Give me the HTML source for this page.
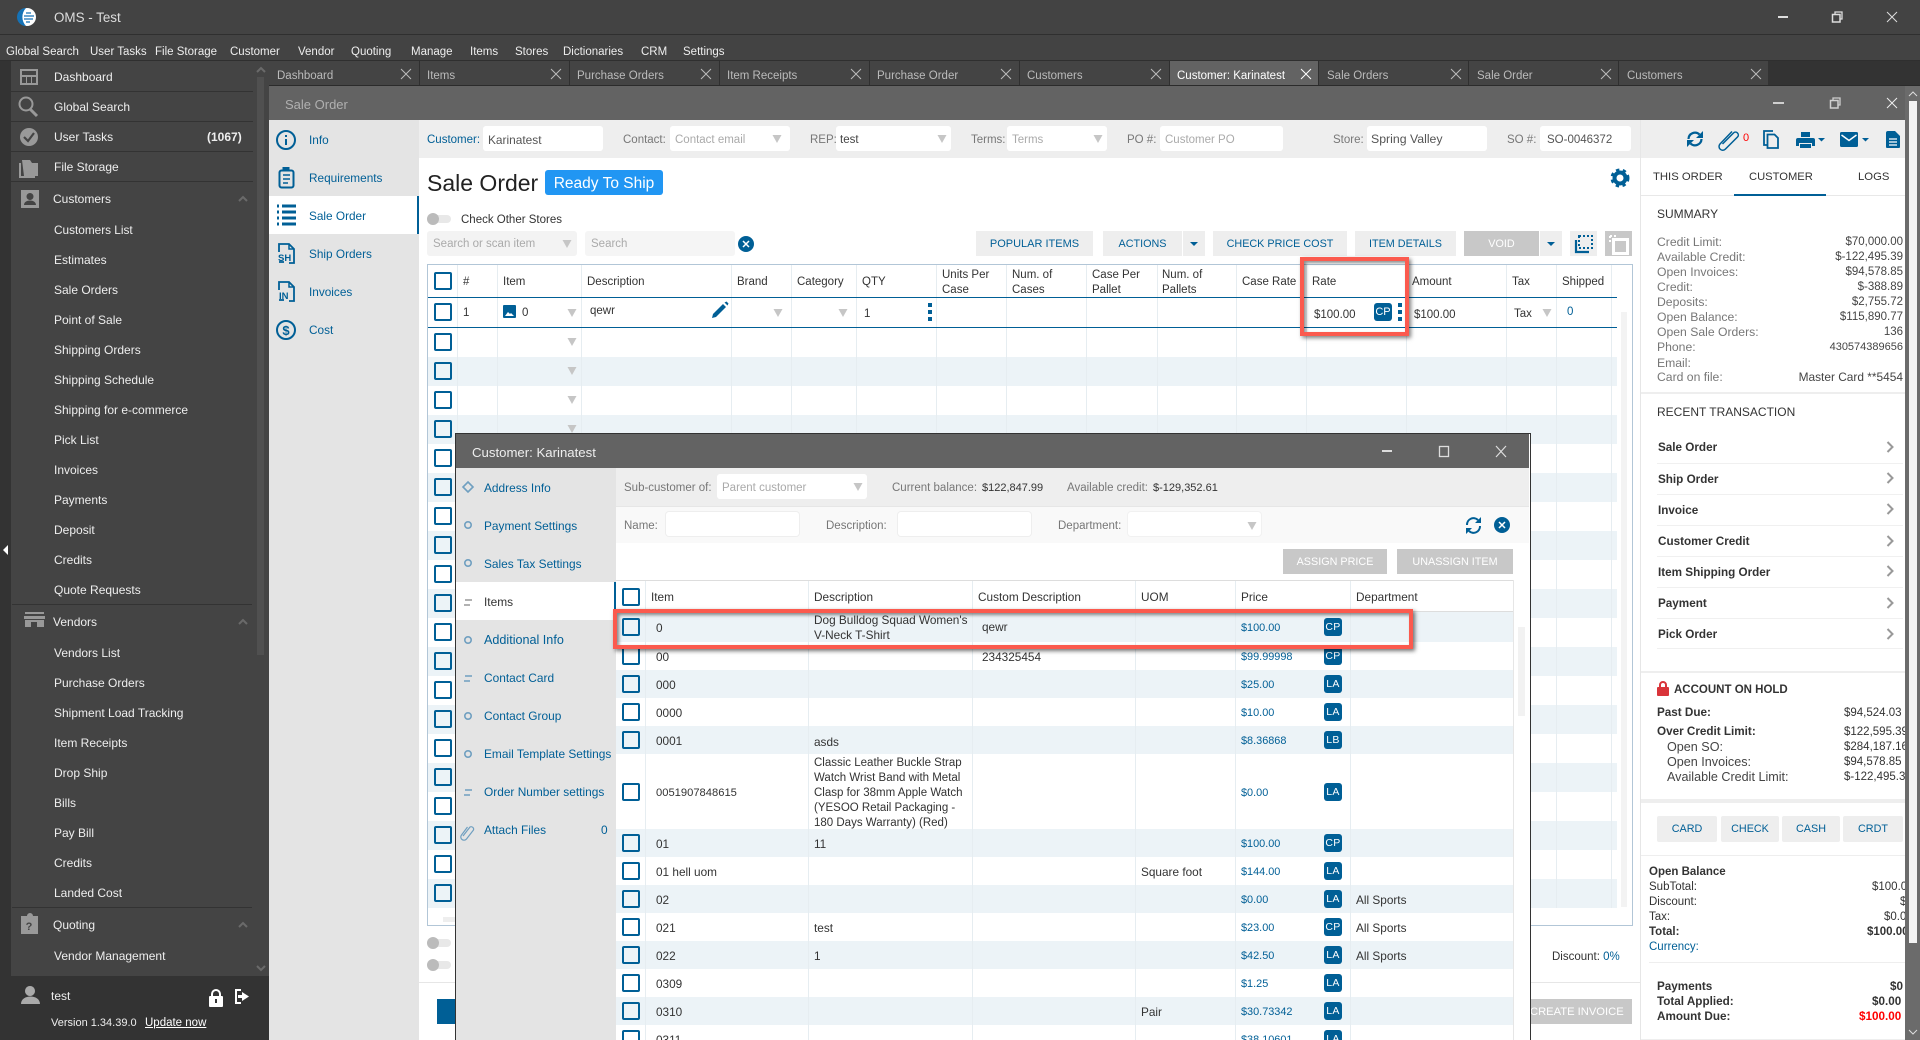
<!DOCTYPE html>
<html><head><meta charset="utf-8"><title>OMS - Test</title>
<style>
html,body{margin:0;padding:0;width:1920px;height:1040px;overflow:hidden;background:#fff}
body{position:relative;font-family:"Liberation Sans",sans-serif;font-size:11.5px;color:#333}
p{position:absolute;margin:1px 0 0;white-space:nowrap;line-height:14px}
.r{position:absolute}
.g{position:absolute;left:0;top:0;width:0;height:0}
svg.o{position:absolute;left:0;top:0;pointer-events:none}
.w p{color:#eee}.tb p{color:#bbb}
.sb p{font-size:12px;margin-top:0}
.mn p{font-size:11.9px}
.sn p{font-size:11.8px;margin-top:0}
.tx p{font-size:11.8px}
.bl p,p.bl{color:#005f96}.gr p,p.gr{color:#777}.ph p{color:#aaa}
.lb p{font-size:12.2px}
.sub p{font-size:12.6px;color:#444}
.pr p{font-size:10.9px}
p.v{left:auto;right:17px;color:#444}
.hl{position:absolute;height:1px}.vl{position:absolute;width:1px;background:#e6edf1}
b.c{position:absolute;display:block;width:18px;height:18px;box-sizing:border-box;border:2px solid #005f96;border-radius:2px}
.inp{position:absolute;height:25px;background:#fff;border-radius:3px}
.btn{position:absolute;height:25px;line-height:26px;background:#eee;color:#005f96;text-align:center;font-size:10.8px}
.dis{background:#c8c8c8;color:#fff}
.bd{position:absolute;left:1324px;width:18px;height:18px;border-radius:3px;background:#005f96;color:#fff;font-size:10.5px;text-align:center;line-height:18px;letter-spacing:.3px}
.bb p{font-weight:bold;color:#333;font-size:11.7px}
</style></head><body>

<div class="r" style="left:0;top:0;width:1920px;height:61px;background:#434343"></div>
<div class="r" style="left:0;top:34px;width:1920px;height:1px;background:#2f2f2f"></div>
<div class="r" style="left:0;top:61px;width:1920px;height:25px;background:#333"></div>
<div class="r" style="left:0;top:60px;width:1920px;height:1px;background:#2f2f2f"></div>
<div class="r" style="left:0;top:61px;width:269px;height:979px;background:#333"></div>
<div class="r" style="left:11px;top:61px;width:258px;height:915px;background:#444"></div>
<div class="r" style="left:257px;top:77px;width:7px;height:578px;background:#505050"></div>

<div class="g w">
<p style="left:54px;top:10px;font-size:13.4px;color:#ddd">OMS - Test</p>
<p style="left:6px;top:44px">Global Search</p><p style="left:90px;top:44px">User Tasks</p><p style="left:155px;top:44px">File Storage</p><p style="left:230px;top:44px">Customer</p><p style="left:298px;top:44px">Vendor</p><p style="left:351px;top:44px">Quoting</p><p style="left:411px;top:44px">Manage</p><p style="left:470px;top:44px">Items</p><p style="left:515px;top:44px">Stores</p><p style="left:563px;top:44px">Dictionaries</p><p style="left:641px;top:44px">CRM</p><p style="left:683px;top:44px">Settings</p>
</div>
<div class="g w sb">
<p style="left:54px;top:70px">Dashboard</p>
<p style="left:54px;top:100px">Global Search</p>
<p style="left:54px;top:130px">User Tasks</p><p style="left:207px;top:130px;font-weight:bold">(1067)</p>
<p style="left:54px;top:160px">File Storage</p>
<p style="left:53px;top:192px">Customers</p>
<p style="left:54px;top:223px;font-size:11.8px">Customers List</p><p style="left:54px;top:253px">Estimates</p><p style="left:54px;top:283px">Sale Orders</p><p style="left:54px;top:313px">Point of Sale</p><p style="left:54px;top:343px">Shipping Orders</p><p style="left:54px;top:373px">Shipping Schedule</p><p style="left:54px;top:403px">Shipping for e-commerce</p><p style="left:54px;top:433px">Pick List</p><p style="left:54px;top:463px">Invoices</p><p style="left:54px;top:493px">Payments</p><p style="left:54px;top:523px">Deposit</p><p style="left:54px;top:553px">Credits</p><p style="left:54px;top:583px">Quote Requests</p>
<p style="left:53px;top:615px">Vendors</p>
<p style="left:54px;top:646px">Vendors List</p><p style="left:54px;top:676px">Purchase Orders</p><p style="left:54px;top:706px">Shipment Load Tracking</p><p style="left:54px;top:736px">Item Receipts</p><p style="left:54px;top:766px">Drop Ship</p><p style="left:54px;top:796px">Bills</p><p style="left:54px;top:826px">Pay Bill</p><p style="left:54px;top:856px">Credits</p><p style="left:54px;top:886px">Landed Cost</p>
<p style="left:53px;top:918px">Quoting</p>
<p style="left:54px;top:949px">Vendor Management</p>
<p style="left:51px;top:989px">test</p>
<p style="left:51px;top:1016px;font-size:11px">Version 1.34.39.0</p>
<p style="left:145px;top:1016px;text-decoration:underline;color:#fff;font-size:11.5px">Update now</p>
</div>
<div class="hl" style="left:11px;top:91px;width:242px;background:#333"></div>
<div class="hl" style="left:11px;top:121px;width:242px;background:#333"></div>
<div class="hl" style="left:11px;top:151px;width:242px;background:#333"></div>
<div class="hl" style="left:11px;top:181px;width:242px;background:#333"></div>
<div class="hl" style="left:12px;top:604px;width:240px;background:#333"></div>
<div class="hl" style="left:12px;top:907px;width:240px;background:#333"></div>

<div class="r" style="left:269px;top:61px;width:1499px;height:24px;background:#444"></div>
<div class="r" style="left:1169px;top:61px;width:149px;height:24px;background:#636363"></div>
<div class="r" style="left:269px;top:85px;width:1651px;height:1px;background:#2b2b2b"></div>
<div class="g tb">
<p style="left:277px;top:68px">Dashboard</p><p style="left:427px;top:68px">Items</p><p style="left:577px;top:68px">Purchase Orders</p><p style="left:727px;top:68px">Item Receipts</p><p style="left:877px;top:68px">Purchase Order</p><p style="left:1027px;top:68px">Customers</p><p style="left:1177px;top:68px;color:#fff">Customer: Karinatest</p><p style="left:1327px;top:68px">Sale Orders</p><p style="left:1477px;top:68px">Sale Order</p><p style="left:1627px;top:68px">Customers</p>
</div>
<div class="vl" style="left:419px;top:61px;height:24px;background:#2f2f2f"></div><div class="vl" style="left:569px;top:61px;height:24px;background:#2f2f2f"></div><div class="vl" style="left:719px;top:61px;height:24px;background:#2f2f2f"></div><div class="vl" style="left:869px;top:61px;height:24px;background:#2f2f2f"></div><div class="vl" style="left:1019px;top:61px;height:24px;background:#2f2f2f"></div><div class="vl" style="left:1169px;top:61px;height:24px;background:#2f2f2f"></div><div class="vl" style="left:1318px;top:61px;height:24px;background:#2f2f2f"></div><div class="vl" style="left:1468px;top:61px;height:24px;background:#2f2f2f"></div><div class="vl" style="left:1618px;top:61px;height:24px;background:#2f2f2f"></div>

<div class="r" style="left:269px;top:86px;width:1636px;height:34px;background:#636363"></div>
<p style="left:285px;top:97px;font-size:13px;color:#b0b0b0">Sale Order</p>

<div class="r" style="left:269px;top:120px;width:150px;height:920px;background:#e4e4e4"></div>
<div class="r" style="left:269px;top:196px;width:150px;height:38px;background:#fff"></div>
<div class="r" style="left:417px;top:196px;width:2px;height:38px;background:#005f96"></div>
<div class="g bl sn">
<p style="left:309px;top:133px">Info</p><p style="left:309px;top:171px">Requirements</p><p style="left:309px;top:209px">Sale Order</p><p style="left:309px;top:247px">Ship Orders</p><p style="left:309px;top:285px">Invoices</p><p style="left:309px;top:323px">Cost</p>
</div>

<div class="r" style="left:419px;top:120px;width:1486px;height:38px;background:#eee"></div>
<div class="r" style="left:1640px;top:120px;width:1px;height:920px;background:#e6e6e6"></div>
<div class="inp" style="left:483px;top:126px;width:120px"></div>
<div class="inp" style="left:670px;top:126px;width:120px"></div>
<div class="inp" style="left:836px;top:126px;width:115px"></div>
<div class="inp" style="left:1007px;top:126px;width:100px"></div>
<div class="inp" style="left:1160px;top:126px;width:123px"></div>
<div class="inp" style="left:1367px;top:126px;width:120px"></div>
<div class="inp" style="left:1540px;top:126px;width:91px"></div>
<p class="bl" style="left:427px;top:132px">Customer:</p>
<p style="left:488px;top:132px;color:#555;font-size:11.9px">Karinatest</p>
<div class="g gr"><p style="left:623px;top:132px">Contact:</p><p style="left:810px;top:132px">REP:</p><p style="left:971px;top:132px">Terms:</p><p style="left:1127px;top:132px">PO #:</p><p style="left:1333px;top:132px">Store:</p><p style="left:1507px;top:132px">SO #:</p></div>
<div class="g ph"><p style="left:675px;top:132px">Contact email</p><p style="left:1012px;top:132px">Terms</p><p style="left:1165px;top:132px">Customer PO</p></div>
<p style="left:840px;top:132px;color:#444">test</p>
<p style="left:1371px;top:131px;color:#555;font-size:12.3px">Spring Valley</p>
<p style="left:1547px;top:132px;color:#555">SO-0046372</p>

<p style="left:427px;top:168px;font-size:23px;line-height:28px;color:#222">Sale Order</p>
<div class="r" style="left:545px;top:170px;width:118px;height:25px;background:#2196f3;border-radius:3px;color:#fff;font-size:15.5px;line-height:27px;text-align:center">Ready To Ship</div>

<div class="r" style="left:427px;top:215px;width:24px;height:8px;background:#e8e8e8;border-radius:4px"></div>
<div class="r" style="left:427px;top:213px;width:12px;height:12px;background:#bbb;border-radius:6px"></div>
<p style="left:461px;top:212px">Check Other Stores</p>

<div class="r" style="left:427px;top:231px;width:150px;height:25px;background:#f3f3f3;border-radius:3px"></div>
<div class="r" style="left:585px;top:231px;width:150px;height:25px;background:#f5f5f5;border-radius:3px"></div>
<div class="g ph"><p style="left:433px;top:236px">Search or scan item</p><p style="left:591px;top:236px">Search</p></div>
<div class="btn" style="left:976px;top:231px;width:117px;font-size:11px">POPULAR ITEMS</div>
<div class="btn" style="left:1103px;top:231px;width:79px">ACTIONS</div>
<div class="btn" style="left:1183px;top:231px;width:22px"></div>
<div class="btn" style="left:1213px;top:231px;width:134px">CHECK PRICE COST</div>
<div class="btn" style="left:1355px;top:231px;width:101px">ITEM DETAILS</div>
<div class="btn dis" style="left:1464px;top:231px;width:75px">VOID</div>
<div class="btn" style="left:1540px;top:231px;width:22px"></div>
<div class="btn" style="left:1570px;top:231px;width:27px"></div>
<div class="btn dis" style="left:1605px;top:231px;width:27px"></div>

<div class="r" style="left:427px;top:264px;width:1204px;height:660px;border:1px solid #b2c6d7;background:#fff"></div>
<div class="r" style="left:428px;top:328px;width:1189px;height:580px;background:repeating-linear-gradient(#fff 0 29px,#ecf3f7 29px 58px)"></div>
<div class="vl" style="left:457px;top:265px;height:643px"></div><div class="vl" style="left:497px;top:265px;height:643px"></div><div class="vl" style="left:581px;top:265px;height:643px"></div><div class="vl" style="left:731px;top:265px;height:643px"></div><div class="vl" style="left:791px;top:265px;height:643px"></div><div class="vl" style="left:856px;top:265px;height:643px"></div><div class="vl" style="left:936px;top:265px;height:643px"></div><div class="vl" style="left:1006px;top:265px;height:643px"></div><div class="vl" style="left:1086px;top:265px;height:643px"></div><div class="vl" style="left:1157px;top:265px;height:643px"></div><div class="vl" style="left:1236px;top:265px;height:643px"></div><div class="vl" style="left:1306px;top:265px;height:643px"></div><div class="vl" style="left:1406px;top:265px;height:643px"></div><div class="vl" style="left:1506px;top:265px;height:643px"></div><div class="vl" style="left:1556px;top:265px;height:643px"></div><div class="vl" style="left:1611px;top:265px;height:643px"></div>
<div class="r" style="left:428px;top:297px;width:1189px;height:1px;background:#005f96"></div>
<div class="r" style="left:428px;top:327px;width:1189px;height:1px;background:#005f96"></div>
<div class="r" style="left:1621px;top:312px;width:6px;height:595px;background:#f3f3f3"></div>
<div class="g">
<p style="left:463px;top:274px">#</p><p style="left:503px;top:274px">Item</p><p style="left:587px;top:274px">Description</p><p style="left:737px;top:274px">Brand</p><p style="left:797px;top:274px">Category</p><p style="left:862px;top:274px">QTY</p>
<p style="left:942px;top:267px">Units Per</p><p style="left:942px;top:282px">Case</p><p style="left:1012px;top:267px">Num. of</p><p style="left:1012px;top:282px">Cases</p><p style="left:1092px;top:267px">Case Per</p><p style="left:1092px;top:282px">Pallet</p><p style="left:1162px;top:267px">Num. of</p><p style="left:1162px;top:282px">Pallets</p>
<p style="left:1242px;top:274px">Case Rate</p><p style="left:1312px;top:274px">Rate</p><p style="left:1412px;top:274px">Amount</p><p style="left:1512px;top:274px">Tax</p><p style="left:1562px;top:274px">Shipped</p>
<p style="left:463px;top:305px">1</p><p style="left:522px;top:305px">0</p><p style="left:590px;top:303px">qewr</p><p style="left:864px;top:306px">1</p><p style="left:1314px;top:307px">$100.00</p><p style="left:1414px;top:307px">$100.00</p><p style="left:1514px;top:306px">Tax</p><p class="bl" style="left:1567px;top:304px">0</p>
</div>
<b class="c" style="left:434px;top:272px"></b><b class="c" style="left:434px;top:303px"></b><b class="c" style="left:434px;top:333px"></b><b class="c" style="left:434px;top:362px"></b><b class="c" style="left:434px;top:391px"></b><b class="c" style="left:434px;top:420px"></b><b class="c" style="left:434px;top:449px"></b><b class="c" style="left:434px;top:478px"></b><b class="c" style="left:434px;top:507px"></b><b class="c" style="left:434px;top:536px"></b><b class="c" style="left:434px;top:565px"></b><b class="c" style="left:434px;top:594px"></b><b class="c" style="left:434px;top:623px"></b><b class="c" style="left:434px;top:652px"></b><b class="c" style="left:434px;top:681px"></b><b class="c" style="left:434px;top:710px"></b><b class="c" style="left:434px;top:739px"></b><b class="c" style="left:434px;top:768px"></b><b class="c" style="left:434px;top:797px"></b><b class="c" style="left:434px;top:826px"></b><b class="c" style="left:434px;top:855px"></b><b class="c" style="left:434px;top:884px"></b>
<div class="r" style="left:1374px;top:303px;width:18px;height:18px;background:#005f96;border-radius:3px;color:#fff;font-size:11px;text-align:center;line-height:18px">CP</div>
<div class="r" style="left:443px;top:917px;width:12px;height:5px;background:#eee"></div>

<div class="r" style="left:427px;top:939px;width:24px;height:8px;background:#e8e8e8;border-radius:4px"></div>
<div class="r" style="left:427px;top:937px;width:12px;height:12px;background:#bbb;border-radius:6px"></div>
<div class="r" style="left:427px;top:961px;width:24px;height:8px;background:#e8e8e8;border-radius:4px"></div>
<div class="r" style="left:427px;top:959px;width:12px;height:12px;background:#bbb;border-radius:6px"></div>
<div class="r" style="left:419px;top:982px;width:1221px;height:1px;background:#e6e6e6"></div>
<div class="r" style="left:437px;top:999px;width:18px;height:25px;background:#005f96"></div>
<p style="left:1552px;top:949px">Discount: <span style="color:#005f96">0%</span></p>
<div class="btn dis" style="left:1529px;top:999px;width:103px;text-align:left;padding-left:1px;box-sizing:border-box;font-size:11.2px;line-height:27px">CREATE INVOICE</div>

<div class="r" style="left:1641px;top:195px;width:264px;height:1px;background:#e8e8e8"></div>
<div class="r" style="left:1734px;top:194px;width:92px;height:2px;background:#005f96"></div>
<p style="left:1653px;top:169px;font-size:11.3px">THIS ORDER</p><p style="left:1749px;top:169px;font-size:11.2px">CUSTOMER</p><p style="left:1858px;top:169px;font-size:11.3px">LOGS</p>
<p style="left:1657px;top:206px;font-size:12px">SUMMARY</p>
<div class="g gr lb"><p style="left:1657px;top:234px">Credit Limit:</p><p style="left:1657px;top:249px">Available Credit:</p><p style="left:1657px;top:264px">Open Invoices:</p><p style="left:1657px;top:279px">Credit:</p><p style="left:1657px;top:294px">Deposits:</p><p style="left:1657px;top:309px">Open Balance:</p><p style="left:1657px;top:324px">Open Sale Orders:</p><p style="left:1657px;top:339px">Phone:</p><p style="left:1657px;top:355px">Email:</p><p style="left:1657px;top:369px">Card on file:</p></div>
<p class="v" style="top:234px">$70,000.00</p>
<p class="v" style="top:249px">$-122,495.39</p>
<p class="v" style="top:264px">$94,578.85</p>
<p class="v" style="top:279px">$-388.89</p>
<p class="v" style="top:294px">$2,755.72</p>
<p class="v" style="top:309px">$115,890.77</p>
<p class="v" style="top:324px">136</p>
<p class="v" style="top:339px;font-size:11px">430574389656</p>
<p class="v" style="top:369px;font-size:11.9px">Master Card **5454</p>
<div class="r" style="left:1641px;top:392px;width:264px;height:2px;background:#eee"></div>
<p style="left:1657px;top:404px;font-size:12px">RECENT TRANSACTION</p>
<div class="g bb"><p style="left:1658px;top:440px">Sale Order</p><p style="left:1658px;top:472px">Ship Order</p><p style="left:1658px;top:503px">Invoice</p><p style="left:1658px;top:534px">Customer Credit</p><p style="left:1658px;top:565px">Item Shipping Order</p><p style="left:1658px;top:596px">Payment</p><p style="left:1658px;top:627px">Pick Order</p></div>
<div class="hl" style="left:1657px;top:463px;width:246px;background:#f0f0f0"></div><div class="hl" style="left:1657px;top:494px;width:246px;background:#f0f0f0"></div><div class="hl" style="left:1657px;top:525px;width:246px;background:#f0f0f0"></div><div class="hl" style="left:1657px;top:556px;width:246px;background:#f0f0f0"></div><div class="hl" style="left:1657px;top:587px;width:246px;background:#f0f0f0"></div><div class="hl" style="left:1657px;top:618px;width:246px;background:#f0f0f0"></div><div class="hl" style="left:1657px;top:648px;width:246px;background:#f0f0f0"></div>
<div class="r" style="left:1641px;top:671px;width:264px;height:2px;background:#eee"></div>
<p style="left:1674px;top:682px;font-weight:bold;font-size:11.5px;color:#333">ACCOUNT ON HOLD</p>
<div class="g bb"><p style="left:1657px;top:705px">Past Due:</p><p style="left:1657px;top:724px">Over Credit Limit:</p></div>
<div class="g sub"><p style="left:1667px;top:739px">Open SO:</p><p style="left:1667px;top:754px">Open Invoices:</p><p style="left:1667px;top:769px">Available Credit Limit:</p></div>
<div class="g"><p style="left:1844px;top:705px">$94,524.03</p><p style="left:1844px;top:724px">$122,595.39</p><p style="left:1844px;top:739px">$284,187.16</p><p style="left:1844px;top:754px">$94,578.85</p><p style="left:1844px;top:769px">$-122,495.39</p></div>
<div class="r" style="left:1641px;top:799px;width:264px;height:4px;background:#eee"></div>
<div class="btn" style="left:1657px;top:816px;width:60px;height:26px;line-height:26px;border-radius:2px">CARD</div>
<div class="btn" style="left:1721px;top:816px;width:58px;height:26px;line-height:26px;border-radius:2px">CHECK</div>
<div class="btn" style="left:1782px;top:816px;width:58px;height:26px;line-height:26px;border-radius:2px">CASH</div>
<div class="btn" style="left:1843px;top:816px;width:60px;height:26px;line-height:26px;border-radius:2px">CRDT</div>
<div class="r" style="left:1641px;top:855px;width:264px;height:1px;background:#eee"></div>
<p style="left:1649px;top:864px;font-weight:bold">Open Balance</p>
<p style="left:1649px;top:879px">SubTotal:</p><p style="left:1649px;top:894px">Discount:</p><p style="left:1649px;top:909px">Tax:</p><p style="left:1649px;top:924px;font-weight:bold">Total:</p><p class="bl" style="left:1649px;top:939px">Currency:</p>
<p style="left:1872px;top:879px">$100.00</p><p style="left:1900px;top:894px">$0.00</p><p style="left:1884px;top:909px">$0.00</p><p style="left:1867px;top:924px;font-weight:bold">$100.00</p>
<div class="r" style="left:1649px;top:962px;width:256px;height:1px;background:#eee"></div>
<div class="g bb"><p style="left:1657px;top:979px">Payments</p><p style="left:1657px;top:994px">Total Applied:</p><p style="left:1657px;top:1009px">Amount Due:</p>
<p style="left:1890px;top:979px">$0</p><p style="left:1872px;top:994px">$0.00</p><p style="left:1859px;top:1009px;color:#f00">$100.00</p></div>
<div class="r" style="left:1641px;top:1039px;width:264px;height:1px;background:#eee"></div>

<div class="r" style="left:1905px;top:86px;width:15px;height:954px;background:#6b6b6b"></div>
<div class="r" style="left:1909px;top:101px;width:8px;height:842px;background:#f3f3f3"></div>

<svg class="o" width="1920" height="1040" viewBox="0 0 1920 1040" xmlns="http://www.w3.org/2000/svg">
<defs>
<path id="tri" d="M-4.500-4h9L0 4z" fill="#c6c6c6"/>
<path id="xx" d="M-5-5 5 5M5-5-5 5" fill="none" stroke-width="1"/>
<path id="chev" d="M-2.500-5 2.500 0-2.500 5" fill="none" stroke="#999" stroke-width="2"/>
<path id="up" d="M-4 2 0-2 4 2" fill="none" stroke="#6a6a6a" stroke-width="2"/>
<g id="dots" fill="#005f96"><rect x="-2" y="-9" width="4" height="4"/><rect x="-2" y="-2" width="4" height="4"/><rect x="-2" y="5" width="4" height="4"/></g>
</defs>
<!-- logo -->
<g transform="translate(27 17)"><circle r="9" fill="#fff"/><path d="M-1-9A9 9 0 0 0-1 9 13 13 0 0 1-1-9z" fill="#1572b6"/><path d="M-1-4H4M-3-1H7M-3 2H6M-1 5H3" stroke="#1572b6" stroke-width="1.200"/></g>
<!-- window controls -->
<g stroke="#ddd" fill="none"><path d="M1778 17h10" stroke-width="2"/><rect x="1832.500" y="14.500" width="7.500" height="7.500" stroke-width="1.500"/><path d="M1835 14v-2h7v7h-2" stroke-width="1.300"/></g>
<use href="#xx" x="1892" y="17" stroke="#ddd" stroke-width="1.300"/>
<g fill="none" stroke="#cfcfcf"><path d="M1773 103h11" stroke-width="2"/><rect x="1830.500" y="100.500" width="7.500" height="7.500" stroke-width="1.500"/><path d="M1833 100v-2h7v7h-2" stroke-width="1.300"/></g>
<use href="#xx" x="1892" y="103" stroke="#eee" stroke-width="1.300"/>
<!-- tab close -->
<g stroke="#bbb"><use href="#xx" x="406" y="74"/><use href="#xx" x="556" y="74"/><use href="#xx" x="706" y="74"/><use href="#xx" x="856" y="74"/><use href="#xx" x="1006" y="74"/><use href="#xx" x="1156" y="74"/><use href="#xx" x="1456" y="74"/><use href="#xx" x="1606" y="74"/><use href="#xx" x="1756" y="74"/></g>
<use href="#xx" x="1306" y="74" stroke="#fff" stroke-width="1.200"/>
<!-- sidebar icons -->
<g fill="#999">
<path fill-rule="evenodd" d="M20 69h18v16H20zM22 71v4h14v-4zM22 77v6h4v-6zM27 77v6h4v-6zM32 77v6h4v-6z"/>
<circle cx="26" cy="104" r="6.500" fill="none" stroke="#999" stroke-width="2"/><path d="M30 109l7 7" stroke="#999" stroke-width="3" fill="none"/>
<circle cx="29" cy="137" r="9"/><path d="M24 137l4 4 6-8" stroke="#444" stroke-width="2.200" fill="none"/>
<path d="M22 160h8l2 3h6v13H24z"/><path d="M20 163v14h15" fill="none" stroke="#999" stroke-width="2"/>
<path fill-rule="evenodd" d="M21 190h18v18H21zM30 193a3.500 3.500 0 1 0 .01 0zM24 205c0-6 12-6 12 0z"/>
<path d="M25 612h19v2H25zM24 616h21v3H24zM25 620h19v7h-7v-5h-6v5h-6z"/>
<path d="M21 916h6a3 3 0 0 1 6 0h5v18H21z"/>
</g>
<text x="29" y="930" font-family="Liberation Sans" font-size="11" fill="#444" text-anchor="middle" font-weight="bold">?</text>
<use href="#up" x="243" y="199"/><use href="#up" x="243" y="622"/><use href="#up" x="243" y="925"/>
<use href="#up" x="261" y="70"/><use href="#up" x="261" y="968" transform="rotate(180 261 968)"/>
<path d="M3 550l5-5v10z" fill="#fff"/>
<path d="M30 986a5 5 0 1 0 .01 0zM21 1004c0-10 19-10 19 0z" fill="#aaa"/>
<g fill="#fff"><rect x="209" y="996" width="14" height="11" rx="1"/><path d="M212 997v-3a4 4 0 0 1 8 0v3" fill="none" stroke="#fff" stroke-width="2"/><path d="M235 989h6v2h-4v11h4v2h-6zM242 992l7 4.500-7 4.500v-3h-4v-3h4z"/></g>
<rect x="215" y="999" width="2" height="4" fill="#333"/>
<!-- nav icons -->
<g stroke="#005f96" fill="none" stroke-width="2">
<circle cx="286" cy="140" r="9"/><path d="M286 139v6M286 135v2"/>
<rect x="279.500" y="170.500" width="14" height="17" rx="2"/><path d="M283 167.500h6v3h-6z" fill="#005f96" stroke-width="1"/><path d="M283 175h7M283 179h7M283 183h5" stroke-width="1.500"/>
<path d="M277 206h2M282 206h14M277 212h2M282 212h14M277 218h2M282 218h14M277 224h2M282 224h14" stroke-width="3"/>
<path d="M279 252v-8h10l5 5v14h-5M279 262h5" stroke-width="1.800"/><path d="M289 244v5h5" stroke-width="1.500"/>
<path d="M279 290v-8h10l5 5v14h-5M279 300h5" stroke-width="1.800"/><path d="M289 282v5h5" stroke-width="1.500"/>
<circle cx="286" cy="330" r="9"/>
</g>
<g font-family="Liberation Sans" font-weight="bold" fill="#005f96"><text x="278" y="261" font-size="9.500">SH</text><text x="279" y="299" font-size="9.500">IN</text><text x="286" y="335" font-size="13" text-anchor="middle">$</text></g>
<!-- dropdown arrows -->
<use href="#tri" x="777" y="139"/><use href="#tri" x="942" y="139"/><use href="#tri" x="1098" y="139"/>
<use href="#tri" x="567" y="244"/>
<use href="#tri" x="572" y="313"/><use href="#tri" x="572" y="342"/><use href="#tri" x="572" y="371"/><use href="#tri" x="572" y="400"/><use href="#tri" x="572" y="429"/>
<use href="#tri" x="778" y="313"/><use href="#tri" x="843" y="313"/><use href="#tri" x="1547" y="313"/>
<!-- clear button -->
<circle cx="746" cy="244" r="8" fill="#005f96"/><path d="M743 241l6 6M749 241l-6 6" stroke="#fff" stroke-width="1.500"/>
<!-- carets -->
<path d="M1190 242h8l-4 4z" fill="#005f96"/><path d="M1547 242h8l-4 4z" fill="#005f96"/>
<!-- selection icons -->
<g fill="none" stroke="#005f96"><rect x="1579" y="236" width="13" height="12" stroke-width="2" stroke-dasharray="2 2"/><path d="M1576 240v12h13" stroke-width="2.200"/></g>
<g fill="none" stroke="#fff"><rect x="1613.500" y="239.500" width="14" height="14" stroke-width="3"/><path d="M1610 236h8M1610 236v8" stroke-dasharray="2 2" stroke-width="2"/></g>
<!-- gear -->
<g transform="translate(1620 178)" fill="none" stroke="#005f96"><circle r="5.500" stroke-width="4"/><circle r="8" stroke-width="3" stroke-dasharray="3.300 3.400"/></g>
<!-- row icons -->
<rect x="503" y="305" width="13" height="13" rx="1" fill="#005f96"/><path d="M505 316l3-4 2 2 1-1 3 3z" fill="#fff"/>
<path d="M712 318l1-4 10-10 3 3-10 10zM724.500 302.500l2-1 2 2-1 2z" fill="#005f96"/>
<use href="#dots" x="930" y="312"/><use href="#dots" x="1400" y="312"/>
<!-- right top icons -->
<g fill="none" stroke="#005f96" stroke-width="2.200"><path d="M1688.500 139a6.500 6.500 0 0 1 11-4.500M1701.500 139a6.500 6.500 0 0 1-11 4.500"/></g>
<path d="M1703 131v7h-7zM1687 147v-7h7z" fill="#005f96"/>
<path d="M1723 145l11-11a2.800 2.800 0 0 1 4 4l-12 12a3.700 3.700 0 0 1-5.500-5l12-12.500" fill="none" stroke="#005f96" stroke-width="1.500" transform="translate(-.5 -1)"/>
<text x="1746" y="141" font-family="Liberation Sans" font-size="11" fill="#f00" text-anchor="middle">0</text>
<path d="M1767 145h-3v-14h9" fill="none" stroke="#005f96" stroke-width="1.800"/><path d="M1767.500 134.500h7l3.500 3.500v10h-10.500z" fill="none" stroke="#005f96" stroke-width="1.800"/>
<g fill="#005f96"><path d="M1801 132h9v5h-9zM1798 138h15a2 2 0 0 1 2 2v6h-3v-3h-13v3h-3v-6a2 2 0 0 1 2-2zM1800 144h11v4h-11z"/><path d="M1818 138h7l-3.500 3.500z"/>
<rect x="1840" y="132" width="18" height="15" rx="1.500"/><path d="M1862 138h7l-3.500 3.500z"/>
<path d="M1886 133a2 2 0 0 1 2-2h7l5 5v11a1 1 0 0 1-1 1h-12a1 1 0 0 1-1-1z"/></g>
<path d="M1841.500 135l7.500 5.500 7.500-5.500" stroke="#fff" stroke-width="1.500" fill="none"/>
<path d="M1889 139h8M1889 142h8M1889 145h8" stroke="#fff" stroke-width="1.300"/>
<!-- chevrons -->
<use href="#chev" x="1890" y="447"/><use href="#chev" x="1890" y="478"/><use href="#chev" x="1890" y="509"/><use href="#chev" x="1890" y="541"/><use href="#chev" x="1890" y="571"/><use href="#chev" x="1890" y="603"/><use href="#chev" x="1890" y="634"/>
<!-- lock -->
<rect x="1657" y="687" width="12" height="9" rx="1" fill="#d9343a"/><path d="M1660 687v-2a3 3 0 0 1 6 0v2" fill="none" stroke="#d9343a" stroke-width="2"/>
<!-- scroll chevrons -->
<path d="M1909 96l4-4 4 4" stroke="#ddd" stroke-width="1" fill="none"/><path d="M1909 1030l4 4 4-4" stroke="#ddd" stroke-width="1" fill="none"/>
</svg>

<!-- red box on main table -->
<div class="r" style="left:1300px;top:257px;width:109px;height:79px;box-sizing:border-box;border:4px solid #fb5a4e;box-shadow:2px 2px 4px rgba(0,0,0,.5),inset 2px 2px 3px rgba(0,0,0,.45)"></div>

<!-- MODAL -->
<div class="r" style="left:455px;top:433px;width:1074px;height:620px;border:1px solid #333;background:#fff"></div>
<div class="r" style="left:456px;top:434px;width:1073px;height:34px;background:#636363"></div>
<p style="left:472px;top:445px;font-size:13.200px;color:#eee">Customer: Karinatest</p>
<div class="r" style="left:456px;top:468px;width:160px;height:572px;background:#e4e4e4"></div>
<div class="r" style="left:456px;top:582px;width:160px;height:38px;background:#fff"></div>
<div class="g bl mn"><p style="left:484px;top:480px">Address Info</p><p style="left:484px;top:518px">Payment Settings</p><p style="left:484px;top:556px">Sales Tax Settings</p><p style="left:484px;top:594px;color:#333">Items</p><p style="left:484px;top:632px;font-size:12.6px">Additional Info</p><p style="left:484px;top:670px">Contact Card</p><p style="left:484px;top:708px">Contact Group</p><p style="left:484px;top:746px">Email Template Settings</p><p style="left:484px;top:784px">Order Number settings</p><p style="left:484px;top:822px">Attach Files</p><p style="left:601px;top:822px">0</p></div>
<div class="r" style="left:616px;top:468px;width:913px;height:38px;background:#eee"></div>
<div class="r" style="left:616px;top:506px;width:913px;height:37px;background:#f9f9f9"></div>
<div class="r" style="left:616px;top:506px;width:913px;height:1px;background:#e6e6e6"></div>
<div class="inp" style="left:717px;top:474px;width:150px"></div>
<div class="inp" style="left:666px;top:512px;width:133px;height:24px;box-shadow:0 0 0 1px #eee"></div>
<div class="inp" style="left:898px;top:512px;width:133px;height:24px;box-shadow:0 0 0 1px #eee"></div>
<div class="inp" style="left:1128px;top:512px;width:133px;height:24px;box-shadow:0 0 0 1px #f1f1f1"></div>
<div class="g gr"><p style="left:624px;top:480px">Sub-customer of:</p><p style="left:892px;top:480px">Current balance:</p><p style="left:1067px;top:480px">Available credit:</p><p style="left:624px;top:518px">Name:</p><p style="left:826px;top:518px">Description:</p><p style="left:1058px;top:518px">Department:</p></div>
<p style="left:722px;top:480px;color:#aaa">Parent customer</p>
<p style="left:982px;top:480px;font-size:11px">$122,847.99</p><p style="left:1153px;top:480px;font-size:11px">$-129,352.61</p>
<div class="btn dis" style="left:1283px;top:549px;width:104px">ASSIGN PRICE</div>
<div class="btn dis" style="left:1397px;top:549px;width:116px">UNASSIGN ITEM</div>
<div class="r" style="left:616px;top:580px;width:897px;height:1px;background:#ddd"></div>
<div class="r" style="left:616px;top:611px;width:897px;height:1px;background:#ddd"></div>
<div class="r" style="left:1513px;top:580px;width:1px;height:460px;background:#e6e6e6"></div>
<div class="r" style="left:616px;top:612px;width:897px;height:30px;background:#ecf3f7"></div>
<div class="r" style="left:616px;top:670px;width:897px;height:28px;background:#ecf3f7"></div>
<div class="r" style="left:616px;top:726px;width:897px;height:28px;background:#ecf3f7"></div>
<div class="r" style="left:616px;top:829px;width:897px;height:28px;background:#ecf3f7"></div>
<div class="r" style="left:616px;top:885px;width:897px;height:28px;background:#ecf3f7"></div>
<div class="r" style="left:616px;top:941px;width:897px;height:28px;background:#ecf3f7"></div>
<div class="r" style="left:616px;top:997px;width:897px;height:28px;background:#ecf3f7"></div>
<div class="vl" style="left:645px;top:581px;height:459px"></div><div class="vl" style="left:808px;top:581px;height:459px"></div><div class="vl" style="left:972px;top:581px;height:459px"></div><div class="vl" style="left:1135px;top:581px;height:459px"></div><div class="vl" style="left:1235px;top:581px;height:459px"></div><div class="vl" style="left:1350px;top:581px;height:459px"></div>
<div class="r" style="left:1518px;top:627px;width:7px;height:89px;background:#f2f2f2"></div>
<div class="g tx">
<p style="left:651px;top:589px">Item</p><p style="left:814px;top:589px">Description</p><p style="left:978px;top:589px">Custom Description</p><p style="left:1141px;top:589px">UOM</p><p style="left:1241px;top:589px">Price</p><p style="left:1356px;top:589px">Department</p>
<p style="left:656px;top:620px">0</p><p style="left:814px;top:612px">Dog Bulldog Squad Women's</p><p style="left:814px;top:627px">V-Neck T-Shirt</p><p style="left:982px;top:619px">qewr</p>
<p style="left:656px;top:649px">00</p><p style="left:982px;top:649px">234325454</p>
<p style="left:656px;top:677px">000</p><p style="left:656px;top:705px">0000</p><p style="left:656px;top:733px">0001</p><p style="left:814px;top:734px">asds</p>
<p style="left:656px;top:785px;font-size:11.2px">0051907848615</p>
<p style="left:814px;top:755px;font-size:11.5px">Classic Leather Buckle Strap</p><p style="left:814px;top:770px;font-size:11.5px">Watch Wrist Band with Metal</p><p style="left:814px;top:785px;font-size:11.5px">Clasp for 38mm Apple Watch</p><p style="left:814px;top:800px;font-size:11.5px">(YESOO Retail Packaging -</p><p style="left:814px;top:815px;font-size:11.5px">180 Days Warranty) (Red)</p>
<p style="left:656px;top:836px">01</p><p style="left:814px;top:836px">11</p>
<p style="left:656px;top:864px">01 hell uom</p><p style="left:1141px;top:864px">Square foot</p>
<p style="left:656px;top:892px">02</p><p style="left:1356px;top:892px">All Sports</p>
<p style="left:656px;top:920px">021</p><p style="left:814px;top:920px">test</p><p style="left:1356px;top:920px">All Sports</p>
<p style="left:656px;top:948px">022</p><p style="left:814px;top:948px">1</p><p style="left:1356px;top:948px">All Sports</p>
<p style="left:656px;top:976px">0309</p>
<p style="left:656px;top:1004px">0310</p><p style="left:1141px;top:1004px">Pair</p>
<p style="left:656px;top:1032px">0311</p>
</div>
<div class="g bl pr">
<p style="left:1241px;top:620px">$100.00</p><p style="left:1241px;top:649px">$99.99998</p><p style="left:1241px;top:677px">$25.00</p><p style="left:1241px;top:705px">$10.00</p><p style="left:1241px;top:733px">$8.36868</p><p style="left:1241px;top:785px">$0.00</p><p style="left:1241px;top:836px">$100.00</p><p style="left:1241px;top:864px">$144.00</p><p style="left:1241px;top:892px">$0.00</p><p style="left:1241px;top:920px">$23.00</p><p style="left:1241px;top:948px">$42.50</p><p style="left:1241px;top:976px">$1.25</p><p style="left:1241px;top:1004px">$30.73342</p><p style="left:1241px;top:1032px">$38.10601</p>
</div>
<b class="c" style="left:622px;top:588px"></b><b class="c" style="left:622px;top:618px"></b><b class="c" style="left:622px;top:647px"></b><b class="c" style="left:622px;top:675px"></b><b class="c" style="left:622px;top:703px"></b><b class="c" style="left:622px;top:731px"></b><b class="c" style="left:622px;top:783px"></b><b class="c" style="left:622px;top:834px"></b><b class="c" style="left:622px;top:862px"></b><b class="c" style="left:622px;top:890px"></b><b class="c" style="left:622px;top:918px"></b><b class="c" style="left:622px;top:946px"></b><b class="c" style="left:622px;top:974px"></b><b class="c" style="left:622px;top:1002px"></b><b class="c" style="left:622px;top:1030px"></b>
<div class="bd" style="top:618px">CP</div><div class="bd" style="top:647px">CP</div><div class="bd" style="top:675px">LA</div><div class="bd" style="top:703px">LA</div><div class="bd" style="top:731px">LB</div><div class="bd" style="top:783px">LA</div><div class="bd" style="top:834px">CP</div><div class="bd" style="top:862px">LA</div><div class="bd" style="top:890px">LA</div><div class="bd" style="top:918px">CP</div><div class="bd" style="top:946px">LA</div><div class="bd" style="top:974px">LA</div><div class="bd" style="top:1002px">LA</div><div class="bd" style="top:1030px">LA</div>

<svg class="o" width="1920" height="1040" viewBox="0 0 1920 1040" xmlns="http://www.w3.org/2000/svg">
<g fill="none" stroke="#ddd"><path d="M1382 451h10" stroke-width="2"/><rect x="1439.500" y="446.500" width="9" height="10" stroke-width="1.300"/><path d="M1496 446l10 11M1506 446l-10 11" stroke-width="1.200"/></g>
<use href="#tri" x="858" y="487"/><use href="#tri" x="1252" y="526"/>
<g fill="none" stroke="#6f9fc0" stroke-width="1.600"><path d="M468 482l5 5-5 5-5-5z"/><circle cx="468" cy="525" r="3.200"/><circle cx="468" cy="563" r="3.200"/><circle cx="468" cy="640" r="3.200"/><circle cx="468" cy="716" r="3.200"/><circle cx="468" cy="754" r="3.200"/><path d="M465 676h7M464 681h6M465 790h7M464 795h6"/><path d="M463 836l7-9a2.500 2.500 0 0 1 3.500 3l-7 9a3 3 0 0 1-5-4l6-8" stroke-width="1.200"/></g>
<path d="M465 600h7M464 605h6" stroke="#999" stroke-width="1.500" fill="none"/>
<g fill="none" stroke="#005f96" stroke-width="2"><path d="M1467 525a6.500 6.500 0 0 1 11-5M1480 526a6.500 6.500 0 0 1-11 5"/></g>
<path d="M1481 517v6h-6zM1466 534v-6h6z" fill="#005f96"/>
<circle cx="1502" cy="525" r="8" fill="#005f96"/><path d="M1499 522l6 6M1505 522l-6 6" stroke="#fff" stroke-width="1.500"/>
</svg>
<div class="r" style="left:614px;top:582px;width:2px;height:28px;background:#005f96"></div>
<!-- red box on modal row -->
<div class="r" style="left:613px;top:609px;width:800px;height:40px;box-sizing:border-box;border:4px solid #fb5a4e;box-shadow:2px 2px 4px rgba(0,0,0,.55),inset 2px 2px 3px rgba(0,0,0,.45)"></div>
</body></html>
